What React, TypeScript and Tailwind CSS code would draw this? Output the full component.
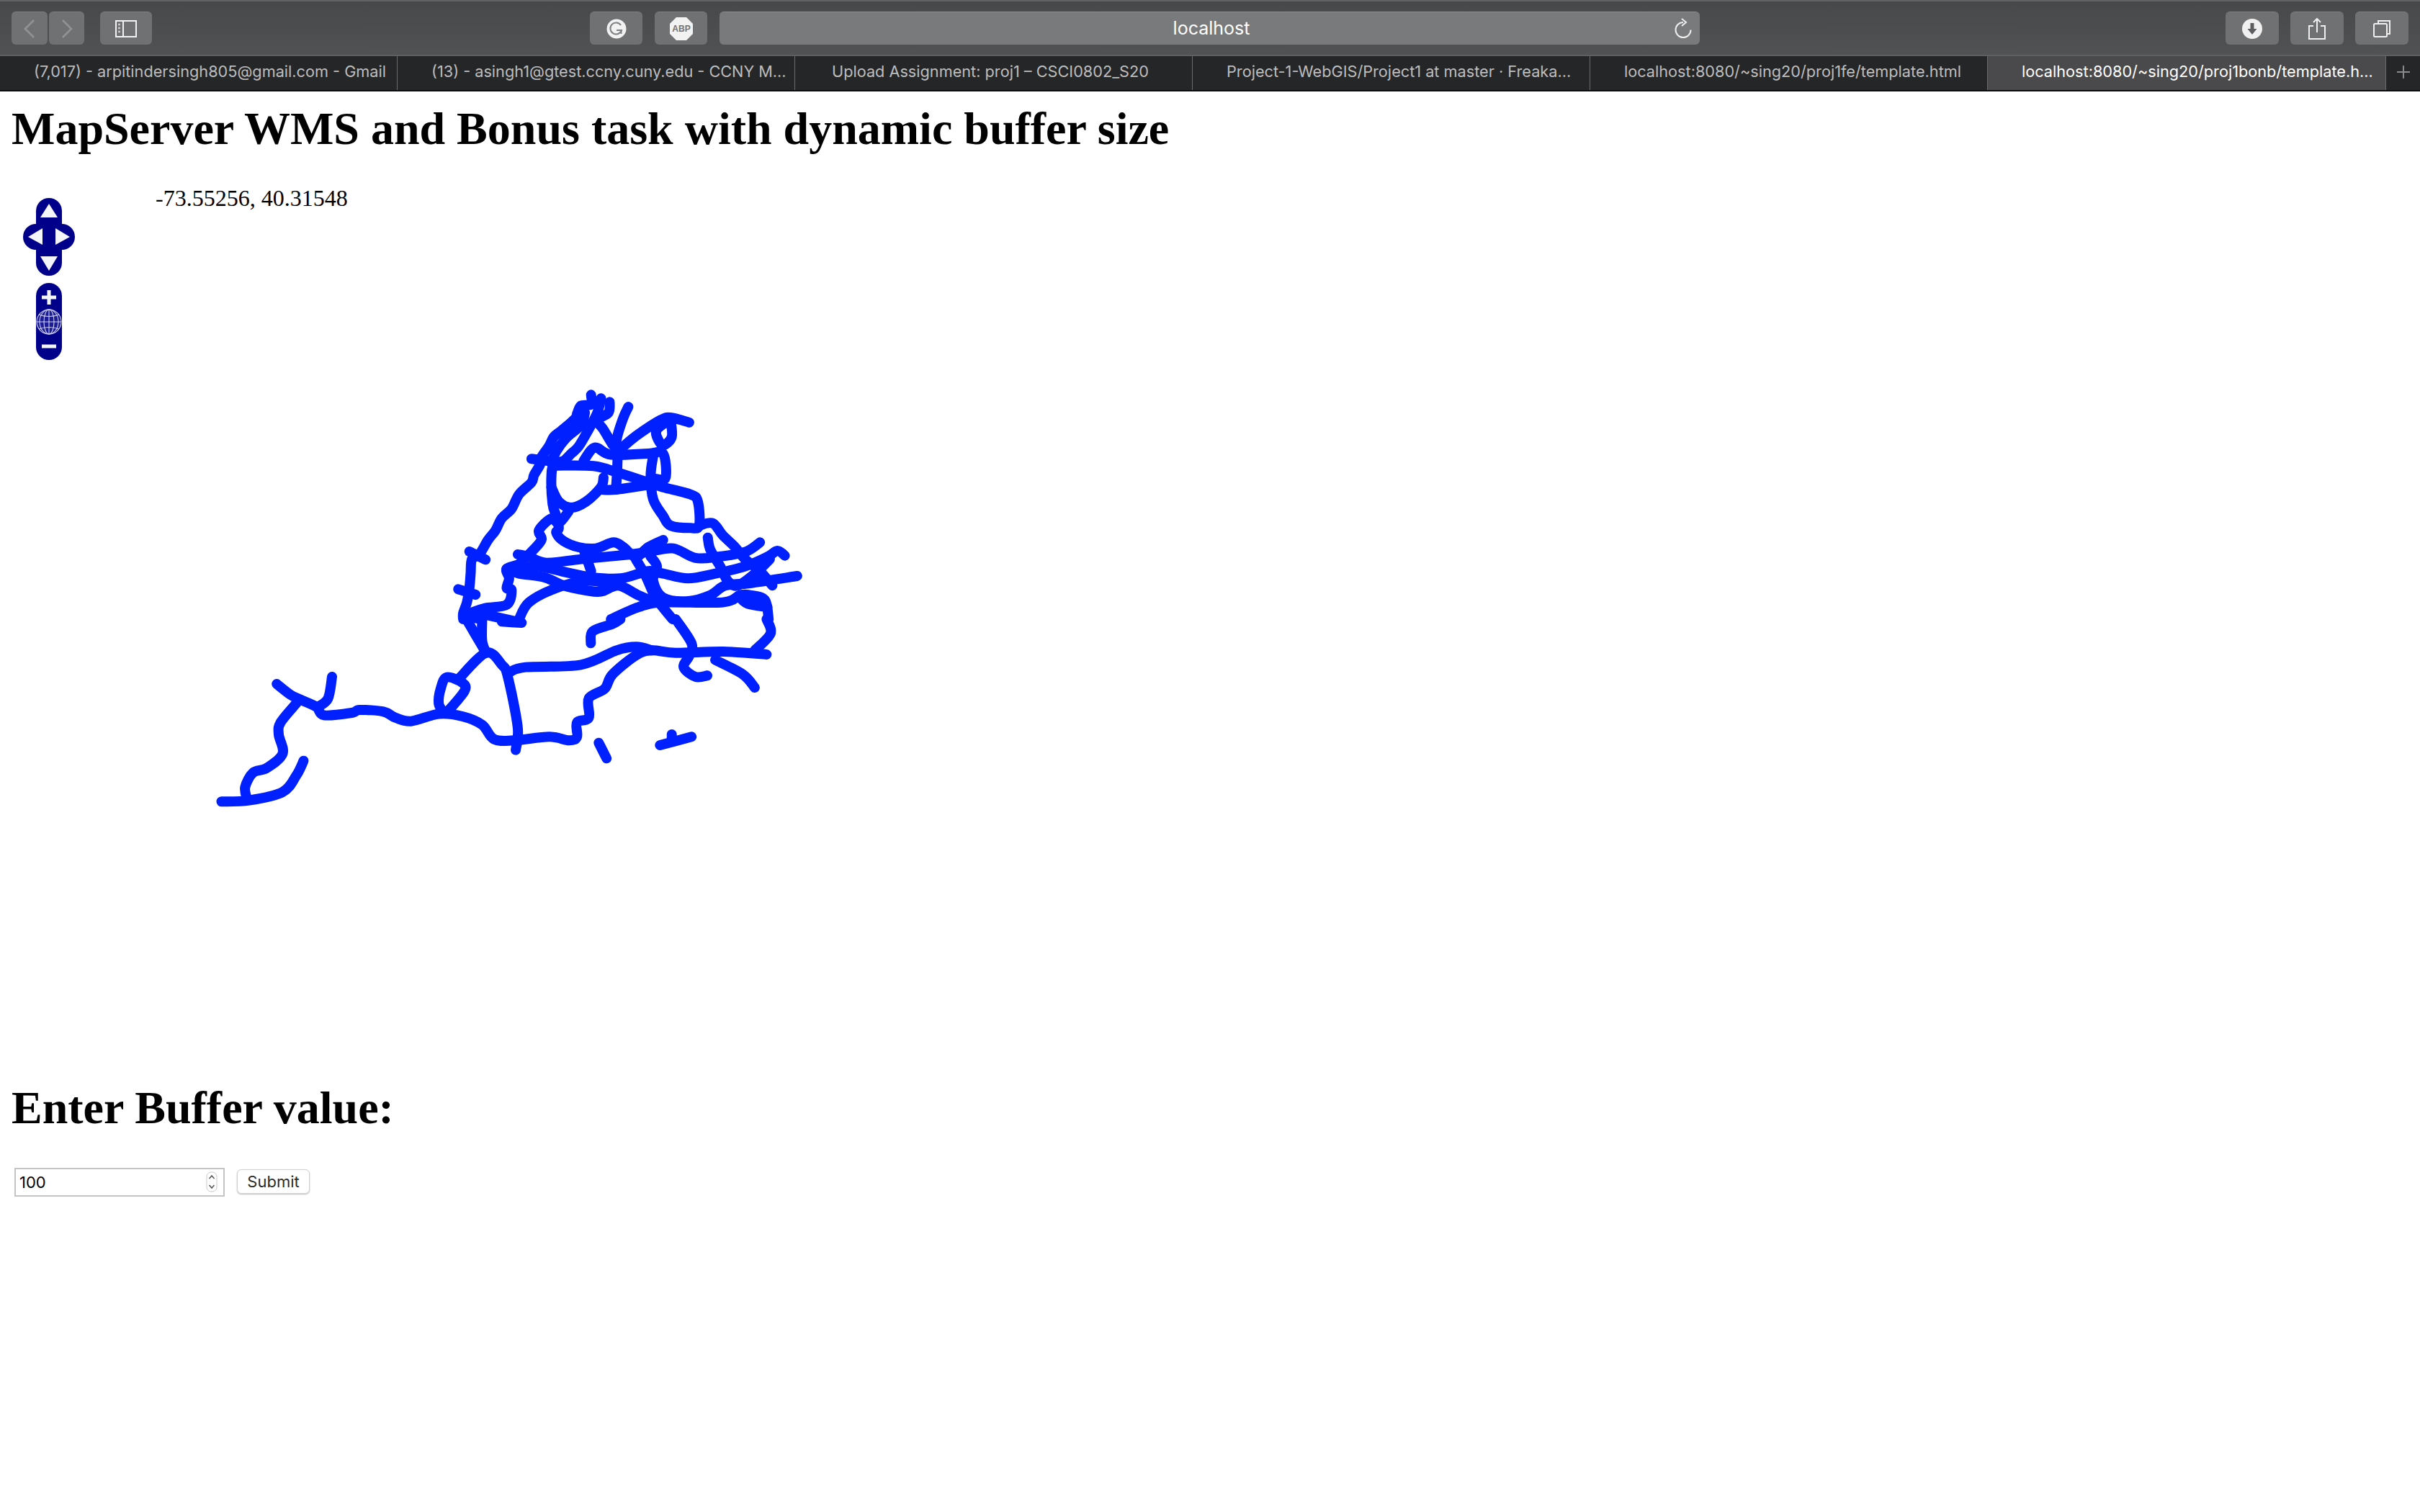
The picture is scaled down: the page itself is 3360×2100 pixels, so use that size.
const tabs = [
  "(7,017) - arpitindersingh805@gmail.com - Gmail",
  "(13) - asingh1@gtest.ccny.cuny.edu - CCNY M…",
  "Upload Assignment: proj1 – CSCI0802_S20",
  "Project-1-WebGIS/Project1 at master · Freaka…",
  "localhost:8080/~sing20/proj1fe/template.html",
  "localhost:8080/~sing20/proj1bonb/template.h…",
];

const upper: string[] = [
  "640,85 640,125 600,130 585,160 575,185 520,235 490,260 470,300 440,345 435,375 410,420 400,450 350,500 320,560 280,600 255,650 225,690 190,750 160,770 155,830 150,890 140,950 125,995 125,1020",
  "400,352 480,362",
  "150,738 215,772",
  "105,895 175,918",
  "615,160 600,210 540,265 500,320 480,370",
  "680,100 665,160 630,230 590,300 560,330 530,360 490,375 480,430 485,540 500,590 510,640 500,660 530,695 590,720 660,725 730,700 770,720 820,760 870,720 930,690",
  "715,115 710,160 665,190 690,230 725,290 745,320 745,400 740,480",
  "790,135 770,180 745,260 740,300",
  "770,300 830,250 920,190 960,180 1035,200",
  "960,190 965,260 930,295 905,260 905,230 940,200",
  "610,360 655,305 720,335 870,330 930,330 940,430 900,435",
  "890,340 880,420 890,520 930,590 960,630 1040,640 1075,630 1070,530 1040,500 930,470 870,450 750,410 650,382 500,380",
  "1075,630 1130,620 1170,670 1220,720 1260,770 1320,820 1370,880",
  "690,430 680,470 620,530 560,555 510,530 480,470",
  "680,480 740,480 870,460",
  "550,570 510,620 480,600 430,650 440,690 390,750 350,790 300,810 310,850 300,890 320,900 300,960 210,975 140,1005 200,1020",
  "345,750 390,760 460,785 600,770 800,750 870,740 970,725 1060,765 1150,760 1260,740 1320,700",
  "610,730 640,820",
  "300,810 350,830 450,845 530,880 620,900 680,905 750,880 830,920 900,950",
  "360,810 430,800 520,820 640,845 760,850 870,820 930,830 1030,850 1140,830 1260,800 1350,760 1390,735 1420,755",
  "820,770 860,840 900,930 960,1010 970,1020",
  "880,760 905,800 890,860 930,930 1030,945 1120,920 1180,880 1280,870 1470,840",
  "1110,680 1120,730 1160,800 1190,860 1230,880 1300,830 1360,770",
  "350,1020 390,950 500,890 620,860 700,870",
  "720,1020 830,970 930,950 1170,950 1240,920 1280,920 1340,940 1355,1020",
  "1240,930 1270,955 1350,970",
  "210,1000 340,1030",
];

const lower: string[] = [
  "190,270 225,315 250,335 290,365 310,400 380,390 400,378 460,385 490,410 530,425 600,395 660,405 710,440 740,500 790,505 880,490 930,505 950,490 950,430 980,410 980,330 1020,290 1040,230 1100,150 1140,130 1200,140 1320,135 1430,147",
  "330,240 320,330 295,365",
  "240,350 200,430 195,480 205,560 165,620 130,640 110,700 115,750",
  "50,760 120,755 205,720 240,650 258,590",
  "620,390 665,300 660,265 620,242 605,290 600,350 610,385",
  "650,250 720,140 760,190 775,240 800,450 795,545",
  "720,140 695,70 670,0",
  "710,0 710,90 720,140",
  "780,220 820,200 960,190 1050,130 1100,115 1140,130",
  "985,100 990,50 1040,20 1060,0",
  "1200,0 1240,100 1235,150 1220,200 1250,240 1280,235",
  "1300,170 1370,230 1400,285",
  "1400,130 1440,60 1430,0",
  "1005,515 1025,580",
  "1160,525 1240,490",
  "1190,480 1190,505",
  "760,10 810,15",
];

function smooth(points: string) {
  const p = points.split(" ").map((s) => s.split(",").map(Number));
  let d = `M${p[0][0]} ${p[0][1]}`;
  for (let i = 0; i < p.length - 1; i++) {
    const a = p[Math.max(i - 1, 0)];
    const b = p[i];
    const c = p[i + 1];
    const e = p[Math.min(i + 2, p.length - 1)];
    const c1x = b[0] + (c[0] - a[0]) / 6;
    const c1y = b[1] + (c[1] - a[1]) / 6;
    const c2x = c[0] - (e[0] - b[0]) / 6;
    const c2y = c[1] - (e[1] - b[1]) / 6;
    d += `C${c1x} ${c1y} ${c2x} ${c2y} ${c[0]} ${c[1]}`;
  }
  return d;
}

function Lines({ list }: { list: string[] }) {
  return (
    <>
      {list.map((p) => (
        <path
          key={p}
          d={smooth(p)}
          fill="none"
          stroke="#0020ff"
          strokeWidth={14}
          strokeLinecap="round"
          strokeLinejoin="round"
          vectorEffect="non-scaling-stroke"
        />
      ))}
    </>
  );
}

function ToolButton({ w, children }: { w: string; children?: React.ReactNode }) {
  return (
    <div className={`${w} h-[46px] rounded-[6px] bg-[#707173] border-t border-[#7d7e80] flex items-center justify-center shrink-0`}>
      {children}
    </div>
  );
}

export default function App() {
  return (
    <div className="min-h-[2100px] bg-white" style={{ fontFamily: '"Liberation Serif", serif' }}>
      <div className="h-[78px] bg-gradient-to-b from-[#47484a] to-[#515254] border-t-2 border-b-2 border-t-[#626365] border-b-[#5e5f61] flex items-center pl-[16px]">
        <ToolButton w="w-[50px]">
          <svg width="18" height="26" viewBox="0 0 18 26" fill="none" stroke="#929395" strokeWidth="2.5"><path d="M15 1 L3 13 L15 25" /></svg>
        </ToolButton>
        <div className="ml-[2px]">
          <ToolButton w="w-[49px]">
            <svg width="18" height="26" viewBox="0 0 18 26" fill="none" stroke="#929395" strokeWidth="2.5"><path d="M3 1 L15 13 L3 25" /></svg>
          </ToolButton>
        </div>
        <div className="ml-[22px]">
          <ToolButton w="w-[72px]">
            <svg width="30" height="24" viewBox="0 0 30 24" fill="none" stroke="#f2f2f2" strokeWidth="2">
              <rect x="1" y="1" width="28" height="22" />
              <path d="M11 1 V23" />
              <path d="M4 6 H7 M4 11 H7 M4 16 H7" strokeWidth="2.5" stroke="#c8c8c8" />
            </svg>
          </ToolButton>
        </div>
        <div className="ml-[608px]">
          <ToolButton w="w-[73px]">
            <svg width="28" height="28" viewBox="0 0 28 28">
              <circle cx="14" cy="14" r="13.5" fill="#f2f2f2" />
              <path d="M20 9 A8 8 0 1 0 21 16 H14" fill="none" stroke="#808183" strokeWidth="2" />
              <path d="M20.5 16 V21" fill="none" stroke="#808183" strokeWidth="2" />
            </svg>
          </ToolButton>
        </div>
        <div className="ml-[17px]">
          <ToolButton w="w-[73px]">
            <svg width="34" height="34" viewBox="0 0 34 34">
              <path d="M10 1 H24 L33 10 V24 L24 33 H10 L1 24 V10 Z" fill="#f2f2f2" />
              <text x="17" y="21" textAnchor="middle" fontSize="12" fontWeight="700" fill="#707173" style={{ fontFamily: '"Liberation Sans", sans-serif' }}>ABP</text>
            </svg>
          </ToolButton>
        </div>
        <div className="ml-[17px] w-[1361px] h-[46px] rounded-[6px] bg-[#797a7b] border-t border-[#8a8b8c] flex items-center relative shrink-0">
          <span className="w-full text-center pl-[5px] text-[25px] leading-none text-white" style={{ fontFamily: 'Inter, sans-serif' }}>localhost</span>
          <svg className="absolute right-[10px] top-[8px]" width="26" height="28" viewBox="0 0 26 28" fill="none" stroke="#eeeeee" strokeWidth="2">
            <path d="M13 6 A10.5 10.5 0 1 0 23.5 16.5" />
            <path d="M11 1 L17 6 L11 11" />
          </svg>
        </div>
        <div className="ml-[730px]">
          <ToolButton w="w-[74px]">
            <svg width="28" height="28" viewBox="0 0 28 28">
              <circle cx="14" cy="14" r="14" fill="#f0f0f0" />
              <path d="M11.5 6 H16.5 V14 H20.5 L14 22 L7.5 14 H11.5 Z" fill="#5c5d5f" />
            </svg>
          </ToolButton>
        </div>
        <div className="ml-[16px]">
          <ToolButton w="w-[74px]">
            <svg width="24" height="30" viewBox="0 0 24 30" fill="none" stroke="#efefef" strokeWidth="2">
              <path d="M7 11 H1 V29 H23 V11 H17" />
              <path d="M12 20 V1 M7 6 L12 1 L17 6" />
            </svg>
          </ToolButton>
        </div>
        <div className="ml-[16px]">
          <ToolButton w="w-[74px]">
            <svg width="24" height="24" viewBox="0 0 24 24" fill="none" stroke="#efefef" strokeWidth="2">
              <path d="M7 5 V1 H23 V19 H19" />
              <rect x="1" y="5" width="18" height="18" rx="1.5" />
            </svg>
          </ToolButton>
        </div>
      </div>

      <div className="h-[49px] bg-[#252627] border-b-2 border-[#0c0c0c] flex text-[21.7px] leading-none text-[#bdbdbe]" style={{ fontFamily: 'Inter, sans-serif' }}>
        {tabs.map((t, i) => (
          <div
            key={t}
            className={
              i === 5
                ? "w-[553px] shrink-0 h-full bg-[#4a4a4c] text-white border-r border-[#6a6a6c] flex items-center pl-[47px] pb-[3px] whitespace-nowrap overflow-hidden"
                : i === 2
                  ? "w-[552px] shrink-0 h-full border-r border-[#6a6a6c] flex items-center pl-[51px] pb-[3px] whitespace-nowrap overflow-hidden"
                  : "w-[552px] shrink-0 h-full border-r border-[#6a6a6c] flex items-center pl-[47px] pb-[3px] whitespace-nowrap overflow-hidden"
            }
          >
            {t}
          </div>
        ))}
        <div className="flex-1 flex items-center justify-center pb-[3px]">
          <svg width="24" height="24" viewBox="0 0 24 24" stroke="#8a8a8c" strokeWidth="2"><path d="M12 3 V21 M3 12 H21" /></svg>
        </div>
      </div>

      <div className="px-[16px]">
        <h1 className="pt-[15px] text-[64px] leading-[73px] font-bold text-black">MapServer WMS and Bonus task with dynamic buffer size</h1>

        <div className="relative h-[1287px] w-[1280px]">
          <svg className="block" width="1280" height="1287" viewBox="16 215 1280 1287">
            <g transform="translate(600 520) scale(0.3448 0.3333)">
              <Lines list={upper} />
            </g>
            <g transform="translate(280 860) scale(0.5485 0.3333)">
              <Lines list={lower} />
            </g>
          </svg>

          <svg className="absolute left-0 top-0" width="120" height="300" viewBox="16 215 120 300">
            <rect x="50" y="275" width="36" height="108" rx="18" fill="#00008b" />
            <rect x="32" y="311" width="72" height="36" rx="18" fill="#00008b" />
            <g fill="#f4f4fb">
              <path d="M68 283 L80 302 H56 Z" />
              <path d="M39 329 L59 317 V340 Z" />
              <path d="M97 329 L77 317 V340 Z" />
              <path d="M68 376 L56 356 H80 Z" />
            </g>
            <rect x="50" y="393" width="36" height="107" rx="18" fill="#00008b" />
            <path d="M58 413 H78 M68 403 V423 M58 481 H78" stroke="#f4f4fb" strokeWidth="5" />
            <g fill="none" stroke="#cfd2f0" strokeWidth="1.1">
              <circle cx="68" cy="447" r="17" fill="#1c1c96" />
              <ellipse cx="68" cy="447" rx="7" ry="17" />
              <ellipse cx="68" cy="447" rx="13" ry="17" />
              <path d="M68 430 V464 M51 447 H85 M54 437 Q68 442 82 437 M54 457 Q68 452 82 457" />
            </g>
          </svg>

          <div className="absolute left-[200px] top-[42px] text-[32px] leading-[37px] text-black whitespace-nowrap">-73.55256, 40.31548</div>
        </div>

        <h1 className="text-[64px] leading-[73px] font-bold text-black">Enter Buffer value:</h1>

        <div className="mt-[47px] flex items-start ml-[4px]">
          <div className="relative w-[292px] h-[40px]">
            <input
              type="text"
              defaultValue="100"
              className="w-full h-full border-2 border-[#c4c4c4] bg-white pl-[5px] text-[22px] text-black outline-none"
              style={{ fontFamily: 'Inter, sans-serif' }}
            />
            <svg className="absolute left-[266px] top-[5px]" width="16" height="29" viewBox="0 0 16 29" fill="none">
              <rect x="1" y="1" width="14" height="27" rx="6" fill="#ffffff" stroke="#c9c9c9" />
              <path d="M4.5 10 L8 6 L11.5 10 M4.5 19 L8 23 L11.5 19" stroke="#555555" strokeWidth="1.5" />
            </svg>
          </div>
          <button
            className="ml-[17px] mt-[2px] w-[101px] h-[34px] rounded-[6px] border border-[#d0d0d0] bg-white text-[22px] leading-none text-[#2a2a2a] shadow-[0_1px_2px_rgba(0,0,0,0.25)]"
            style={{ fontFamily: 'Inter, sans-serif' }}
          >
            Submit
          </button>
        </div>
      </div>
    </div>
  );
}
